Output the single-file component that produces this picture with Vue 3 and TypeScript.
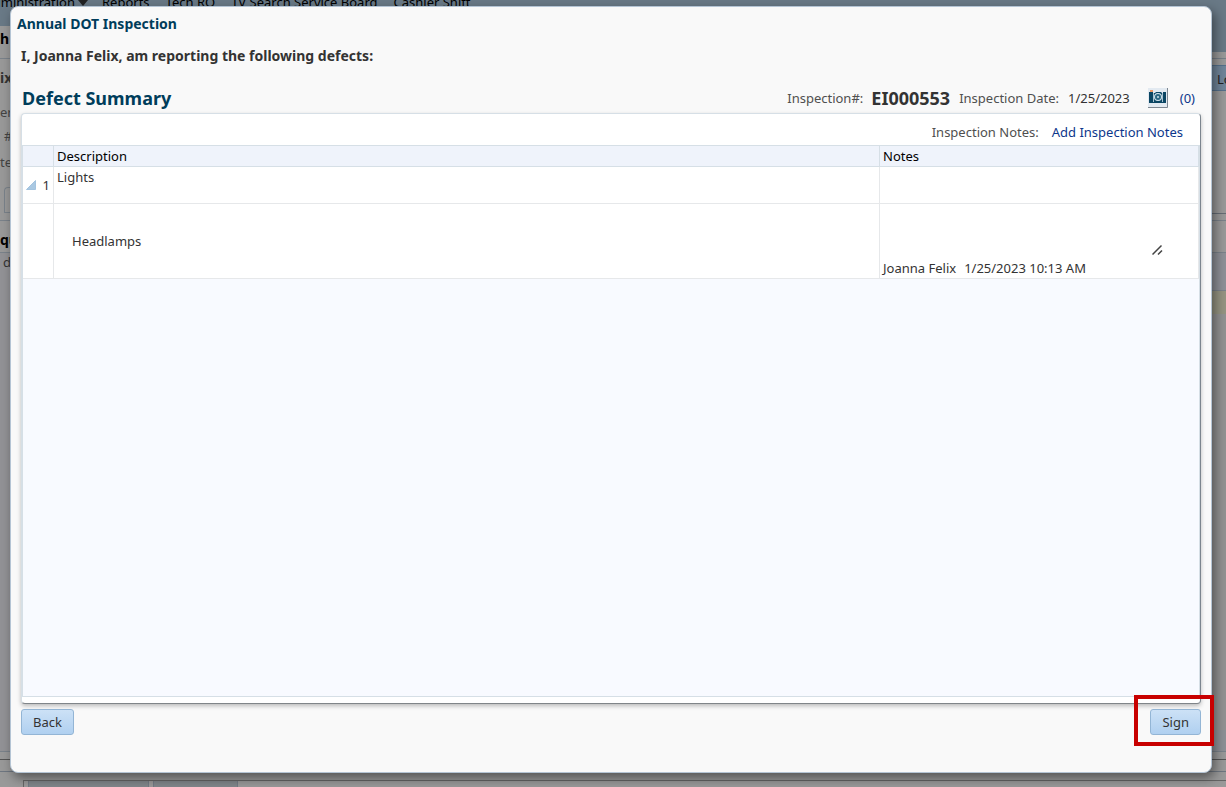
<script setup lang="ts">
import { ref } from 'vue'

interface DefectRow {
  index?: number
  description: string
  author?: string
  stamp?: string
}

const menu: string[] = ['Reports', 'Tech RO', 'TV Search Service Board', 'Cashier Shift']

const rows: DefectRow[] = [
  { index: 1, description: 'Lights' },
  { description: 'Headlamps', author: 'Joanna Felix', stamp: '1/25/2023 10:13 AM' },
]

const note = ref('')
</script>

<template>
  <div class="screen">
    <div class="backdrop" aria-hidden="true">
      <div class="nav">
        <span class="nav-first">uministration</span>
        <svg class="caret" width="10" height="6" viewBox="0 0 10 6"><path d="M0 0h10L5 6z" fill="#222" /></svg>
        <span v-for="item in menu" :key="item" class="nav-item">{{ item }}</span>
      </div>
      <div class="sides">
        <div class="left">
          <div class="l-title">h</div>
          <div class="l-name">ix</div>
          <div class="l-field">er</div>
          <div class="l-field short indent">#</div>
          <div class="l-field last">te</div>
          <div class="l-tab"></div>
          <div class="l-gap"></div>
          <div class="l-head">qu</div>
          <div class="l-body">d</div>
        </div>
        <div class="right">
          <div class="r-nav"></div>
          <div class="r-bar"></div>
          <div class="r-button">Lo</div>
          <div class="r-panel"></div>
          <div class="r-tab"></div>
          <div class="r-head"></div>
          <div class="r-blue"></div>
          <div class="r-yellow"></div>
          <div class="r-fill"></div>
          <div class="r-foot"></div>
        </div>
      </div>
      <div class="status"></div>
      <div class="status dark"></div>
      <div class="bottom"><div class="tabs"><i></i><i></i></div></div>
    </div>

    <main class="dialog" role="dialog" aria-labelledby="dialog-title">
      <h1 id="dialog-title" class="title">Annual DOT Inspection</h1>
      <p class="statement">I, Joanna Felix, am reporting the following defects:</p>

      <div class="summary">
        <h2>Defect Summary</h2>
        <div class="meta">
          <span class="label">Inspection#:</span>
          <strong>EI000553</strong>
          <span class="label">Inspection Date:</span>
          <span class="date">1/25/2023</span>
          <button class="camera" type="button" aria-label="Photos">
            <svg width="20" height="20" viewBox="0 0 20 20">
              <rect width="20" height="20" fill="#e3eaf1" />
              <path d="M19.5 0v19.5H0" fill="none" stroke="#7d8791" />
              <path d="M1 4h4v1h2l1-1h5l1 1h1V4h3v11H1z" fill="#0b4664" />
              <path d="M5 5h1v9H5zM14 5h1v9h-1z" fill="#a9c3d1" />
              <rect x="2" y="2" width="3" height="2" fill="#ec9a68" />
              <circle cx="10" cy="9" r="4" fill="#d5e6ee" />
              <circle cx="10" cy="9" r="3" fill="#2c6884" />
              <circle cx="10" cy="9" r="1" fill="#cfe2ea" />
            </svg>
          </button>
          <a href="#">(0)</a>
        </div>
      </div>

      <section class="panel">
        <div class="toolbar">
          <span class="label">Inspection Notes:</span>
          <a href="#">Add Inspection Notes</a>
        </div>
        <div class="grid">
          <table>
            <colgroup>
              <col class="c-num" />
              <col />
              <col class="c-notes" />
            </colgroup>
            <thead>
              <tr>
                <th></th>
                <th>Description</th>
                <th>Notes</th>
              </tr>
            </thead>
            <tbody>
              <tr v-for="row in rows" :key="row.description" :class="row.index ? 'group' : 'detail'">
                <td class="num">
                  <div v-if="row.index" class="num-in">
                    <svg width="10" height="10" viewBox="0 0 10 10"><path d="M9.500 .5v9H.5z" fill="#a9c8e2" stroke="#a3c3df" /></svg>
                    <span>{{ row.index }}</span>
                  </div>
                </td>
                <td class="desc">{{ row.description }}</td>
                <td class="notes">
                  <div v-if="row.author" class="note">
                    <div class="entry">
                      <textarea v-model="note" aria-label="Headlamps notes"></textarea>
                      <svg class="grip" width="11" height="11" viewBox="0 0 11 11">
                        <path d="M.5 10.500l9-9M6 10.500l4-4" fill="none" stroke="#444" stroke-width="1.500" />
                      </svg>
                    </div>
                    <div class="sig"><span>{{ row.author }}</span><span>{{ row.stamp }}</span></div>
                  </div>
                </td>
              </tr>
            </tbody>
          </table>
        </div>
      </section>

      <footer class="actions">
        <button class="btn" type="button">Back</button>
        <div class="sign">
          <button class="btn" type="button">Sign</button>
          <span class="marker"></span>
        </div>
      </footer>
    </main>
  </div>
</template>

<style>
body {
  margin: 0;
}
</style>

<style scoped>
* {
  box-sizing: border-box;
}
.screen {
  position: relative;
  height: 100vh;
  overflow: hidden;
  font-family: "Noto Sans", "DejaVu Sans Condensed", sans-serif;
  font-size: 13px;
  line-height: 16px;
  color: #333;
}
.backdrop {
  display: flex;
  flex-direction: column;
  height: 100%;
  background: #999;
}
.nav {
  display: flex;
  height: 26px;
  flex: none;
  align-items: flex-start;
  background: #697986;
  color: #000;
  white-space: nowrap;
}
.nav span {
  margin-top: -6px;
}
.nav-first {
  display: flex;
  justify-content: flex-end;
  width: 75px;
}
.caret {
  margin: 0 14px 0 3px;
}
.nav-item {
  margin-right: 16px;
}
.sides {
  flex: 1;
  display: flex;
  justify-content: space-between;
  min-height: 0;
}
.left {
  display: flex;
  flex-direction: column;
  width: 20px;
}
.left > div {
  flex: none;
}
.l-title {
  height: 33px;
  padding-top: 5px;
  font-size: 14px;
  font-weight: bold;
  color: #000;
  border-bottom: 1px solid #7a828a;
}
.l-name {
  height: 39px;
  padding-top: 11px;
  font-size: 14px;
  font-weight: bold;
}
.l-field {
  height: 29px;
  padding-top: 6px;
  color: #444;
}
.l-field.short {
  height: 25px;
  padding-top: 1px;
}
.l-field.last {
  padding-top: 2px;
}
.indent {
  padding-left: 4px;
}
.l-tab {
  height: 26px;
  margin: 6px 0 0 4px;
  border: 1px solid #7a828a;
  border-right: 0;
  border-radius: 4px 0 0 0;
}
.l-gap {
  height: 8px;
  border-bottom: 1px solid #7a828a;
}
.l-head {
  height: 32px;
  padding-top: 11px;
  font-size: 14px;
  font-weight: bold;
  color: #000;
  border-bottom: 1px solid #7a828a;
}
.left > .l-body {
  flex: 1;
  padding: 1px 0 0 3px;
  background: #929296;
}
.right {
  display: flex;
  flex-direction: column;
  width: 24px;
}
.right > div {
  flex: none;
}
.r-nav {
  height: 26px;
  background: #697986;
}
.r-bar {
  height: 7px;
  border-bottom: 1px solid #777f88;
}
.r-button {
  height: 26px;
  margin-top: 6px;
  padding: 5px 0 0 14px;
  border: 1px solid #55718c;
  border-right: 0;
  background: #70859a;
  color: #222;
  white-space: nowrap;
  overflow: hidden;
}
.r-panel {
  height: 123px;
  border-bottom: 1px solid #666d75;
}
.r-tab {
  height: 7px;
  border-bottom: 1px solid #7a828a;
}
.r-head {
  height: 32px;
  border-bottom: 1px solid #7a828a;
}
.r-blue {
  height: 38px;
  background: #8e9097;
  border-bottom: 1px solid #7a828a;
}
.r-yellow {
  height: 23px;
  background: #959482;
}
.right > .r-fill {
  flex: 1;
  background: #929292;
}
.r-foot {
  height: 21px;
  background: #8d9096;
}
.status {
  flex: none;
  height: 8px;
  border-top: 1px solid #7a828a;
}
.status.dark {
  height: 12px;
  border-top: 1px solid #555;
}
.bottom {
  flex: none;
  height: 16px;
  padding: 8px 0 0 23px;
  border-top: 1px solid #6e7680;
}
.tabs {
  display: flex;
  gap: 4px;
  height: 8px;
  padding-left: 4px;
  border-top: 1px solid #666;
  border-left: 1px solid #666;
}
.bottom i {
  width: 121px;
  background: #80868a;
  border: 1px solid #727a84;
  border-width: 0 1px;
}
.bottom i + i {
  width: 85px;
}
.dialog {
  position: absolute;
  inset: 6px 14px 14px 10px;
  display: flex;
  flex-direction: column;
  padding: 9px 10px 37px;
  border: 1px solid #b4c4d4;
  border-radius: 8px;
  background: #f9f9f9;
  box-shadow: 3px 5px 12px rgba(0, 0, 0, 0.45);
}
h1,
h2,
p {
  margin: 0;
}
.title {
  margin-left: -4px;
  font-size: 14px;
  line-height: 16px;
  color: #003d5b;
}
.statement {
  margin-top: 16px;
  font-size: 14px;
  font-weight: bold;
}
.summary {
  display: flex;
  justify-content: space-between;
  align-items: center;
  height: 32px;
  margin-top: 17px;
  padding: 1px 6px 0 1px;
}
h2 {
  font-size: 18px;
  line-height: 22px;
  color: #003d5b;
}
.meta {
  display: flex;
  align-items: center;
}
.label {
  color: #4f4f4f;
}
.meta strong {
  margin: 0 9px 0 8px;
  font-size: 18px;
}
.date {
  margin-left: 9px;
}
.camera {
  display: flex;
  margin: 0 12px 0 18px;
  padding: 0;
  border: 0;
  background: none;
}
a {
  color: #0d378b;
  text-decoration: none;
}
.panel {
  flex: 1;
  display: flex;
  flex-direction: column;
  padding-bottom: 6px;
  border: 1px solid #d6dfe6;
  border-right: 1px solid #7c858e;
  border-bottom: 1px solid #808589;
  border-radius: 4px;
  background: #fff;
  box-shadow: 0 2px 4px rgba(0, 0, 0, 0.25);
}
.toolbar {
  display: flex;
  justify-content: flex-end;
  gap: 13px;
  height: 31px;
  padding: 10px 17px 0 0;
}
.grid {
  flex: 1;
  border: 1px solid #d6dfe6;
  background: #f8faff;
}
table {
  width: 100%;
  table-layout: fixed;
  border-collapse: separate;
  border-spacing: 0;
}
.c-num {
  width: 31px;
}
.c-notes {
  width: 319px;
}
th,
td {
  padding: 0 3px;
  text-align: left;
  border-right: 1px solid #e6e8ea;
  border-bottom: 1px solid #e6e8ea;
}
th {
  height: 21px;
  font-weight: normal;
  color: #000;
  background: #eff3fb;
  border-color: #d6dfe6;
}
td {
  background: #fff;
}
.group td {
  height: 37px;
}
.detail td {
  height: 75px;
}
.group .desc {
  padding-top: 2px;
  vertical-align: top;
}
.detail .desc {
  padding-left: 18px;
}
.num-in {
  display: flex;
  align-items: center;
  justify-content: space-between;
}
.notes {
  vertical-align: bottom;
}
.note {
  display: flex;
  flex-direction: column;
  gap: 5px;
  padding-bottom: 2px;
}
.entry {
  position: relative;
  display: flex;
  margin-right: 32px;
}
textarea {
  flex: 1;
  height: 46px;
  padding: 2px;
  border: 0;
  background: #fff;
  font: inherit;
  color: inherit;
  resize: none;
}
.grip {
  position: absolute;
  right: 0;
  bottom: 0;
  pointer-events: none;
}
.sig {
  display: flex;
  gap: 8px;
}
.actions {
  display: flex;
  justify-content: space-between;
  margin-top: 5px;
}
.btn {
  display: block;
  height: 26px;
  padding: 0 11px;
  border: 1px solid #93b5d5;
  border-radius: 3px;
  background: linear-gradient(#cce1f6, #b0d0f0);
  font: inherit;
  color: #333;
}
.sign {
  position: relative;
}
.marker {
  position: absolute;
  inset: -14px -13px -11px -16px;
  border: 4px solid #c80000;
  pointer-events: none;
}
</style>
